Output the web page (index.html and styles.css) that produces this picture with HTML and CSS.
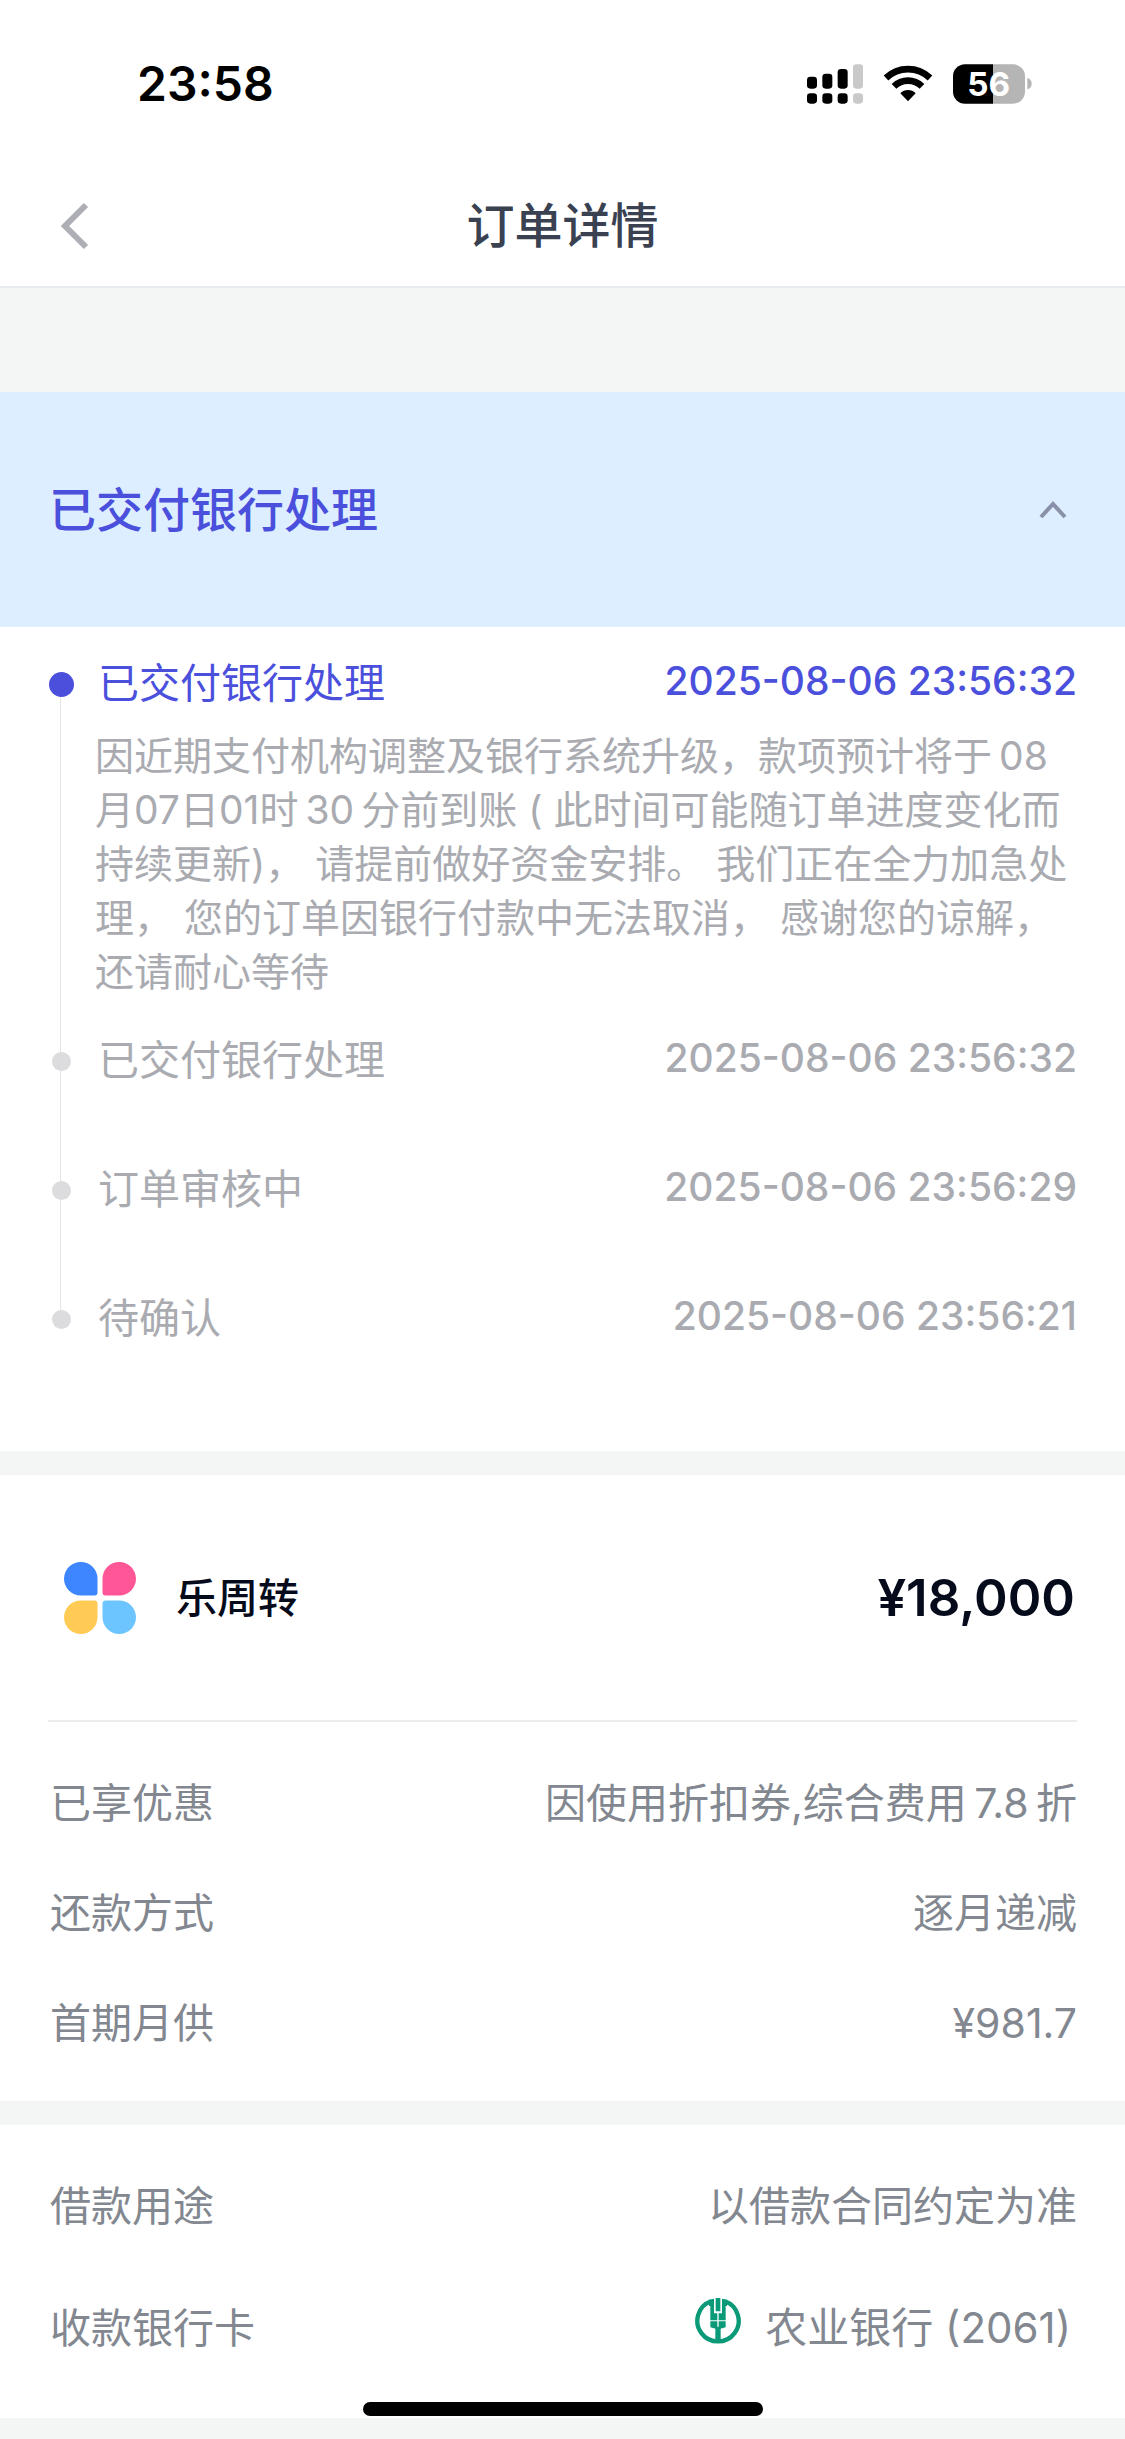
FILE: index.html
```html
<!DOCTYPE html>
<html lang="zh-CN">
<head>
<meta charset="utf-8">
<meta name="viewport" content="width=device-width, initial-scale=1">
<title>订单详情</title>
<link rel="stylesheet" href="styles.css">
</head>
<body>
<div class="status-bar">
  <time class="clock">23:58</time>
  <div class="status-icons">
    <svg width="56" height="40" viewBox="0 0 168 120" aria-label="信号">
      <rect x="0" y="38" width="30" height="36" rx="10"/>
      <rect x="46" y="29" width="30" height="45" rx="10"/>
      <rect x="92" y="15" width="30" height="59" rx="10"/>
      <rect x="138" y="1" width="30" height="73" rx="10" fill="#c9c9c9"/>
      <rect x="0" y="88" width="30" height="31" rx="10"/>
      <rect x="46" y="88" width="30" height="31" rx="10"/>
      <rect x="92" y="88" width="30" height="31" rx="10"/>
      <rect x="138" y="88" width="30" height="31" rx="10" fill="#c9c9c9"/>
    </svg>
    <svg width="50" height="40" viewBox="0 0 150 120" aria-label="无线网络">
      <g fill="none" stroke="#000" stroke-width="20">
        <path d="M9 42 A95 95 0 0 1 141 42"/>
        <path d="M33 67 A60 60 0 0 1 117 67"/>
      </g>
      <path d="M75 112 L52 88 A32 32 0 0 1 98 88 Z"/>
    </svg>
    <svg width="79" height="40" viewBox="0 0 237 120" aria-label="电量 56%">
      <path d="M120 1 H36 A36 36 0 0 0 0 37 V83 A36 36 0 0 0 36 119 H120 Z"/>
      <path d="M120 1 H180 A36 36 0 0 1 216 37 V83 A36 36 0 0 1 180 119 H120 Z" fill="#b5b5b5"/>
      <path d="M223 42 Q236 46 236 59 Q236 72 223 76 Z" fill="#b5b5b5"/>
      <text class="battery-level" x="107" y="95" text-anchor="middle">56</text>
    </svg>
  </div>
</div>

<header class="nav">
  <button class="back" type="button" aria-label="返回">
    <svg width="30" height="48" viewBox="0 0 30 48"><path d="M26 3 L5 24 L26 45" fill="none" stroke="#adafb5" stroke-width="6"/></svg>
  </button>
  <h1 class="nav-title">订单详情</h1>
</header>

<main>
  <section class="progress">
    <button class="progress-head" type="button" aria-expanded="true">
      <span>已交付银行处理</span>
      <svg width="30" height="20" viewBox="0 0 30 20"><path d="M3 17 L15 4 L27 17" fill="none" stroke="#8a90aa" stroke-width="4"/></svg>
    </button>
    <ol class="timeline">
      <li class="step current">
        <span class="step-name">已交付银行处理</span>
        <time>2025-08-06 23:56:32</time>
        <p class="step-note">因近期支付机构调整及银行系统升级，款项预计将于&thinsp;08月07日01时&thinsp;30&thinsp;分前到账 ( 此时间可能随订单进度变化而持续更新)， 请提前做好资金安排。 我们正在全力加急处理， 您的订单因银行付款中无法取消， 感谢您的谅解，还请耐心等待</p>
      </li>
      <li class="step">
        <span class="step-name">已交付银行处理</span>
        <time>2025-08-06 23:56:32</time>
      </li>
      <li class="step">
        <span class="step-name">订单审核中</span>
        <time>2025-08-06 23:56:29</time>
      </li>
      <li class="step">
        <span class="step-name">待确认</span>
        <time>2025-08-06 23:56:21</time>
      </li>
    </ol>
  </section>

  <section class="loan">
    <div class="loan-head">
      <svg class="logo" width="72" height="72" viewBox="0 0 72 72" aria-hidden="true">
        <path fill="#3d86ff" d="M33.500 17 A16.750 16.750 0 1 0 16.750 33.500 H30.500 Q33.500 33.500 33.500 30.500 Z"/>
        <path fill="#ff5697" d="M38.500 17 A16.750 16.750 0 1 1 55.250 33.500 H41.500 Q38.500 33.500 38.500 30.500 Z"/>
        <path fill="#ffcb55" d="M33.500 55 A16.750 16.750 0 1 1 16.750 38.500 H30.500 Q33.500 38.500 33.500 41.500 Z"/>
        <path fill="#6dc5ff" d="M38.500 55 A16.750 16.750 0 1 0 55.250 38.500 H41.500 Q38.500 38.500 38.500 41.500 Z"/>
      </svg>
      <h2 class="loan-name">乐周转</h2>
      <strong class="amount">¥18,000</strong>
    </div>
    <dl class="details">
      <div class="row"><dt>已享优惠</dt><dd>因使用折扣券,综合费用&thinsp;7.8&thinsp;折</dd></div>
      <div class="row"><dt>还款方式</dt><dd>逐月递减</dd></div>
      <div class="row"><dt>首期月供</dt><dd>¥981.7</dd></div>
    </dl>
  </section>

  <section class="account">
    <dl class="details wide">
      <div class="row"><dt>借款用途</dt><dd>以借款合同约定为准</dd></div>
      <div class="row"><dt>收款银行卡</dt>
        <dd class="bank">
          <svg width="46" height="46" viewBox="0 0 138 138" aria-hidden="true">
            <path fill="none" stroke="#0b9a78" stroke-width="13" d="M48 10 A62 62 0 1 0 90 10"/>
            <path fill="#0b9a78" d="M42 5 L57 2 V46 H67 V67 H46 V24 H42 Z M96 5 L81 2 V46 H71 V67 H92 V24 H96 Z M62 0 H76 V40 H62 Z M46 70 H67 V94 L46 88 Z M71 70 H92 V88 L71 94 Z M61 86 H77 V132 H61 Z"/>
          </svg>
          <span>农业银行 (2061)</span>
        </dd>
      </div>
    </dl>
  </section>
</main>
<div class="home-indicator"></div>
</body>
</html>
```

FILE: styles.css
```css
* { box-sizing: border-box; }

body {
  margin: 0;
  background: #f4f6f5;
  color: #828790;
  font-family: Inter, "Noto Sans CJK SC", sans-serif;
  font-size: 41px;
  line-height: 60px;
}

h1, h2, p, ol, dl, dd { margin: 0; }
button { border: 0; background: none; font: inherit; cursor: pointer; }
svg { display: block; flex: none; }

.status-bar {
  display: flex;
  align-items: center;
  justify-content: space-between;
  height: 168px;
  padding: 0 93px 0 137px;
  background: #fff;
}
.clock { color: #000; font-size: 48px; font-weight: 600; }
.status-icons { display: flex; gap: 20px; }
.battery-level { fill: #fff; font-size: 100px; font-weight: 700; }

.nav {
  display: grid;
  grid-template-columns: 120px 1fr 120px;
  align-items: center;
  height: 120px;
  padding-bottom: 2px;
  border-bottom: 2px solid #e8ebf0;
  background: #fff;
}
.back { padding: 0 0 0 60px; }
.nav-title {
  color: #3a4252;
  font-size: 48px;
  font-weight: 500;
  text-align: center;
}

.progress { margin-top: 104px; background: #fff; }
.progress-head {
  display: flex;
  align-items: center;
  justify-content: space-between;
  width: 100%;
  height: 235px;
  padding: 0 57px 0 49px;
  background: #dceeff;
  color: #4b50dc;
  font-size: 47px;
  font-weight: 500;
}

.timeline {
  padding: 26px 48px 34px;
  list-style: none;
}
.step {
  position: relative;
  display: grid;
  grid-template-columns: 1fr auto;
  min-height: 129px;
  align-content: start;
  padding-left: 47px;
  color: #a9abb1;
}
.step-name { padding-left: 3px; }
.step time { font-size: 39px; font-weight: 500; line-height: 56px; }
.step-note {
  grid-column: 1 / -1;
  padding: 16px 0 31px;
  font-size: 39px;
  line-height: 54px;
}
.current .step-name, .current time { color: #4b50dc; }
.step::before {
  content: "";
  position: absolute;
  z-index: 1;
  top: 22px;
  left: 4px;
  width: 19px;
  height: 19px;
  border-radius: 50%;
  background: #dcdcde;
}
.step.current::before {
  top: 19px;
  left: 1px;
  width: 25px;
  height: 25px;
  background: #4b50dc;
}
.step:not(:last-child)::after {
  content: "";
  position: absolute;
  top: 32px;
  bottom: -32px;
  left: 12px;
  width: 1px;
  background: #e4e4e6;
}

.loan, .account { margin-top: 24px; background: #fff; }
.loan { padding: 0 48px; }
.loan-head {
  display: flex;
  align-items: center;
  height: 247px;
  padding: 0 2px 0 16px;
  border-bottom: 2px solid #ececee;
}
.loan-name {
  margin-left: 40px;
  color: #060b1c;
  font-size: 41px;
  font-weight: 500;
}
.amount { margin-left: auto; color: #060b1c; font-size: 51px; font-weight: 600; }

.details {
  display: flex;
  flex-direction: column;
  gap: 50px;
  padding: 51px 0 48px;
}
.details.wide { gap: 62px; padding: 51px 48px 60px; }
.row { display: flex; justify-content: space-between; }
.row dt { padding-left: 2px; }
.bank {
  display: flex;
  align-items: flex-start;
  gap: 24px;
  padding-right: 6px;
  font-size: 42px;
}

.home-indicator {
  position: fixed;
  bottom: 23px;
  left: 50%;
  width: 400px;
  height: 14px;
  margin-left: -200px;
  border-radius: 7px;
  background: #000;
}
```
